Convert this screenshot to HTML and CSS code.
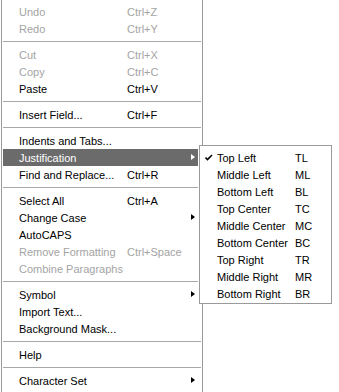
FILE: index.html
```html
<!DOCTYPE html>
<html lang="en">
<head>
  <meta charset="UTF-8" />
  <title>Text Menu</title>
  <link rel="stylesheet" href="styles.css">
</head>
<body>
  <div class="menu">
    <div class="item disabled"><span class="label">Undo</span><span class="key">Ctrl+Z</span></div>
    <div class="item disabled"><span class="label">Redo</span><span class="key">Ctrl+Y</span></div>
    <div class="sep"></div>
    <div class="item disabled"><span class="label">Cut</span><span class="key">Ctrl+X</span></div>
    <div class="item disabled"><span class="label">Copy</span><span class="key">Ctrl+C</span></div>
    <div class="item"><span class="label">Paste</span><span class="key">Ctrl+V</span></div>
    <div class="sep"></div>
    <div class="item"><span class="label">Insert Field...</span><span class="key">Ctrl+F</span></div>
    <div class="sep"></div>
    <div class="item"><span class="label">Indents and Tabs...</span></div>
    <div class="item active sub"><span class="label">Justification</span></div>
    <div class="item"><span class="label">Find and Replace...</span><span class="key">Ctrl+R</span></div>
    <div class="sep"></div>
    <div class="item"><span class="label">Select All</span><span class="key">Ctrl+A</span></div>
    <div class="item sub"><span class="label">Change Case</span></div>
    <div class="item"><span class="label">AutoCAPS</span></div>
    <div class="item disabled"><span class="label">Remove Formatting</span><span class="key">Ctrl+Space</span></div>
    <div class="item disabled"><span class="label">Combine Paragraphs</span></div>
    <div class="sep"></div>
    <div class="item sub"><span class="label">Symbol</span></div>
    <div class="item"><span class="label">Import Text...</span></div>
    <div class="item"><span class="label">Background Mask...</span></div>
    <div class="sep"></div>
    <div class="item"><span class="label">Help</span></div>
    <div class="sep"></div>
    <div class="item sub"><span class="label">Character Set</span></div>
    <div class="item"><span class="label">WWW</span><span class="key">MMM</span></div>
  </div>

  <div class="submenu">
    <div class="item checked"><span class="check"><svg width="8" height="7" viewBox="0 0 8 7"><path d="M0.5 3.5 L2.5 5.5 L7 1" fill="none" stroke="#000" stroke-width="1.6"/></svg></span><span class="label">Top Left</span><span class="key">TL</span></div>
    <div class="item"><span class="check"></span><span class="label">Middle Left</span><span class="key">ML</span></div>
    <div class="item"><span class="check"></span><span class="label">Bottom Left</span><span class="key">BL</span></div>
    <div class="item"><span class="check"></span><span class="label">Top Center</span><span class="key">TC</span></div>
    <div class="item"><span class="check"></span><span class="label">Middle Center</span><span class="key">MC</span></div>
    <div class="item"><span class="check"></span><span class="label">Bottom Center</span><span class="key">BC</span></div>
    <div class="item"><span class="check"></span><span class="label">Top Right</span><span class="key">TR</span></div>
    <div class="item"><span class="check"></span><span class="label">Middle Right</span><span class="key">MR</span></div>
    <div class="item"><span class="check"></span><span class="label">Bottom Right</span><span class="key">BR</span></div>
  </div>
</body>
</html>
```

FILE: styles.css
```css
* {
  box-sizing: border-box;
  margin: 0;
  padding: 0;
}

body {
  background-color: #fff;
  font-family: 'Liberation Sans', Arial, sans-serif;
  font-size: 11px;
  color: #000;
  overflow: hidden;
  height: 392px;
}

.menu {
  position: relative;
  margin-left: 1px;
  width: 202px;
  border-left: 1px solid #9a9a9a;
  border-right: 1px solid #9a9a9a;
  padding: 3px 0 0 1px;
}

.item {
  display: flex;
  align-items: center;
  height: 17px;
  padding-left: 16px;
  position: relative;
  white-space: nowrap;
}

.menu .label {
  width: 108px;
}

.item.disabled {
  color: #a4a4a4;
}

.item.active {
  background-color: #6b6b6b;
  color: #fff;
}

.sub::after {
  content: '';
  position: absolute;
  left: 188px;
  top: 5px;
  border-left: 4px solid #000;
  border-top: 3.5px solid transparent;
  border-bottom: 3.5px solid transparent;
}

.sub.active::after {
  border-left-color: #fff;
}

.sep {
  height: 9px;
  display: flex;
  align-items: center;
  margin-right: 1px;
}

.sep::before {
  content: '';
  flex: 1;
  height: 1px;
  background-color: #a8a8a8;
}

.submenu {
  position: absolute;
  left: 199px;
  top: 145px;
  width: 133px;
  border: 1px solid #9a9a9a;
  background-color: #fff;
  box-shadow: -1px 0 0 #fff;
  padding: 3px 0 1px 0;
}

.submenu .item {
  padding-left: 5px;
}

.submenu .check {
  width: 12px;
  display: flex;
  align-items: center;
}

.submenu .label {
  width: 78px;
}
```
